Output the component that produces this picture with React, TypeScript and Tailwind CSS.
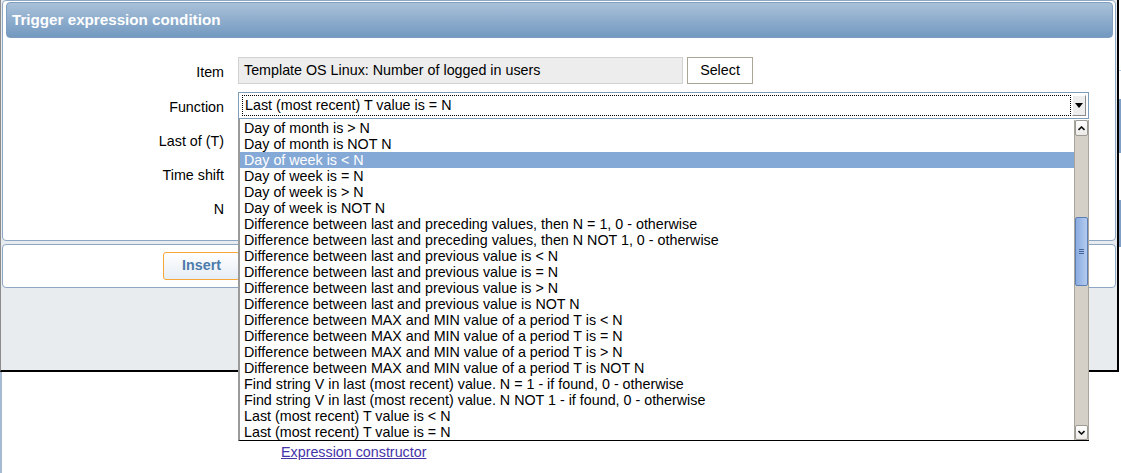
import React from 'react';

const functionOptions = [
  'Day of month is > N',
  'Day of month is NOT N',
  'Day of week is < N',
  'Day of week is = N',
  'Day of week is > N',
  'Day of week is NOT N',
  'Difference between last and preceding values, then N = 1, 0 - otherwise',
  'Difference between last and preceding values, then N NOT 1, 0 - otherwise',
  'Difference between last and previous value is < N',
  'Difference between last and previous value is = N',
  'Difference between last and previous value is > N',
  'Difference between last and previous value is NOT N',
  'Difference between MAX and MIN value of a period T is < N',
  'Difference between MAX and MIN value of a period T is = N',
  'Difference between MAX and MIN value of a period T is > N',
  'Difference between MAX and MIN value of a period T is NOT N',
  'Find string V in last (most recent) value. N = 1 - if found, 0 - otherwise',
  'Find string V in last (most recent) value. N NOT 1 - if found, 0 - otherwise',
  'Last (most recent) T value is < N',
  'Last (most recent) T value is = N',
];

const highlighted = 2;

function FormLabel({ children }: { children: React.ReactNode }) {
  return <div className="w-[221px] shrink-0 pt-[5px] text-right">{children}</div>;
}

function ScrollArrow({ up }: { up?: boolean }) {
  return (
    <div className="flex h-full items-center justify-center rounded-[2px] border border-[#9c9a94] bg-gradient-to-b from-white to-[#ecebe8]">
      <svg width="7" height="5" viewBox="0 0 7 5">
        <path
          d={up ? 'M0.5 4L3.5 1L6.5 4' : 'M0.5 1L3.5 4L6.5 1'}
          fill="none"
          stroke="#111"
          strokeWidth="1.6"
        />
      </svg>
    </div>
  );
}

export default function App() {
  return (
    <div className="relative h-[473px] w-[1121px] overflow-hidden bg-white font-['Liberation_Sans',Arial,sans-serif] text-[14.3px] text-black">
      <div className="flex">
        {/* Dialog window */}
        <div className="flex h-[372px] w-[1119px] shrink-0 flex-col gap-[3px] border-b-2 border-l border-r-2 border-b-black border-l-[#8c8c8c] border-r-black bg-[#e9ecef] pl-[1px] pr-[1px]">
          {/* Form panel */}
          <div className="h-[241px] rounded-[4px] border border-[#8ea7c4] bg-white">
            <div className="ml-[3px] mr-[2px] mt-[1px] flex h-[36px] items-center rounded-[4px] border border-[#7f9dbf] bg-gradient-to-b from-[#a9c1d9] to-[#7399c0] pl-[5px] text-[15.2px] font-bold text-white">
              Trigger expression condition
            </div>

            <div className="pt-[19px]">
              <div className="flex h-[27px] items-center gap-[14px]">
                <FormLabel>Item</FormLabel>
                <div className="flex items-center gap-[4px]">
                  <div className="flex h-[27px] w-[445px] items-center border border-[#d2d2d2] bg-[#ededed] pl-[5px]">
                    Template OS Linux: Number of logged in users
                  </div>
                  <div className="flex h-[27px] w-[66px] items-center justify-center border border-[#aaa595] bg-white">
                    Select
                  </div>
                </div>
              </div>

              <div className="mt-[8px] flex h-[27px] items-center gap-[14px]">
                <FormLabel>Function</FormLabel>
                <div className="flex h-[27px] w-[851px] items-center border border-[#7f9db9] bg-white pl-[3px] pr-[2px]">
                  <div className="flex h-[21px] flex-1 items-center border border-dotted border-black pl-[2px]">
                    Last (most recent) T value is = N
                  </div>
                  <div className="ml-[1px] flex h-[21px] w-[14px] items-center justify-center border border-b-[#8a8a8a] border-l-white border-r-[#8a8a8a] border-t-white bg-[#eeeeee]">
                    <svg width="8" height="5" viewBox="0 0 8 5">
                      <path d="M0 0H8L4 5Z" fill="#000" />
                    </svg>
                  </div>
                </div>
              </div>

              <div className="mt-[7px] flex h-[27px] items-center gap-[14px]">
                <FormLabel>Last of (T)</FormLabel>
                <div className="h-[25px] w-[60px] border border-[#cccccc] bg-white" />
              </div>
              <div className="mt-[7px] flex h-[27px] items-center gap-[14px]">
                <FormLabel>Time shift</FormLabel>
                <div className="h-[25px] w-[60px] border border-[#cccccc] bg-white" />
              </div>
              <div className="mt-[7px] flex h-[27px] items-center gap-[14px]">
                <FormLabel>N</FormLabel>
                <div className="h-[25px] w-[60px] border border-[#cccccc] bg-white" />
              </div>
            </div>
          </div>

          {/* Buttons panel */}
          <div className="flex h-[44px] items-center rounded-[4px] border border-[#8ea7c4] bg-white pl-[160px]">
            <div className="flex h-[28px] w-[77px] items-center justify-center rounded-[3px] border border-[#f5a838] bg-gradient-to-b from-white to-[#e6edf5] font-bold text-[#4d7bab]">
              Insert
            </div>
          </div>
        </div>

        {/* Page behind the dialog */}
        <div className="relative h-[372px] w-[2px] bg-white">
          <div className="absolute left-0 top-[70px] h-px w-[2px] bg-[#b9c9dc]" />
          <div className="absolute left-0 top-[99px] h-[54px] w-[2px] bg-[#7f9fc6]" />
          <div className="absolute left-0 top-[200px] h-[47px] w-[2px] bg-[#7f9fc6]" />
        </div>
      </div>

      <div className="h-[101px] border-l-2 border-[#a6bad2] pl-[279px] pt-[72px] leading-[16px]">
        <span className="text-[#4434a8] underline">Expression constructor</span>
      </div>

      {/* Open function dropdown */}
      <div className="absolute left-[238px] top-[119px] flex h-[322px] w-[851px] border-b border-l-2 border-b-black border-l-[#9a9a9a] bg-white pt-[1px]">
        <div className="flex-1">
          {functionOptions.map((opt, i) => (
            <div
              key={opt}
              className={`h-[16px] whitespace-nowrap pl-[4px] leading-[16px] ${
                i === highlighted ? 'bg-[#85a9d6] text-white' : ''
              }`}
            >
              {opt}
            </div>
          ))}
        </div>
        <div className="flex w-[15px] flex-col border-x border-[#a9a59d] bg-[#d4d0c8]">
          <div className="h-[16px]">
            <ScrollArrow up />
          </div>
          <div className="h-[81px]" />
          <div className="flex h-[69px] flex-col items-center justify-center gap-[1px] rounded-[2px] border border-[#5b7eb4] bg-gradient-to-r from-[#8aace0] to-[#b4cbef]">
            <div className="h-px w-[5px] bg-[#44649a]" />
            <div className="h-px w-[5px] bg-[#44649a]" />
            <div className="h-px w-[5px] bg-[#44649a]" />
          </div>
          <div className="flex-1" />
          <div className="h-[15px]">
            <ScrollArrow />
          </div>
        </div>
      </div>
    </div>
  );
}
